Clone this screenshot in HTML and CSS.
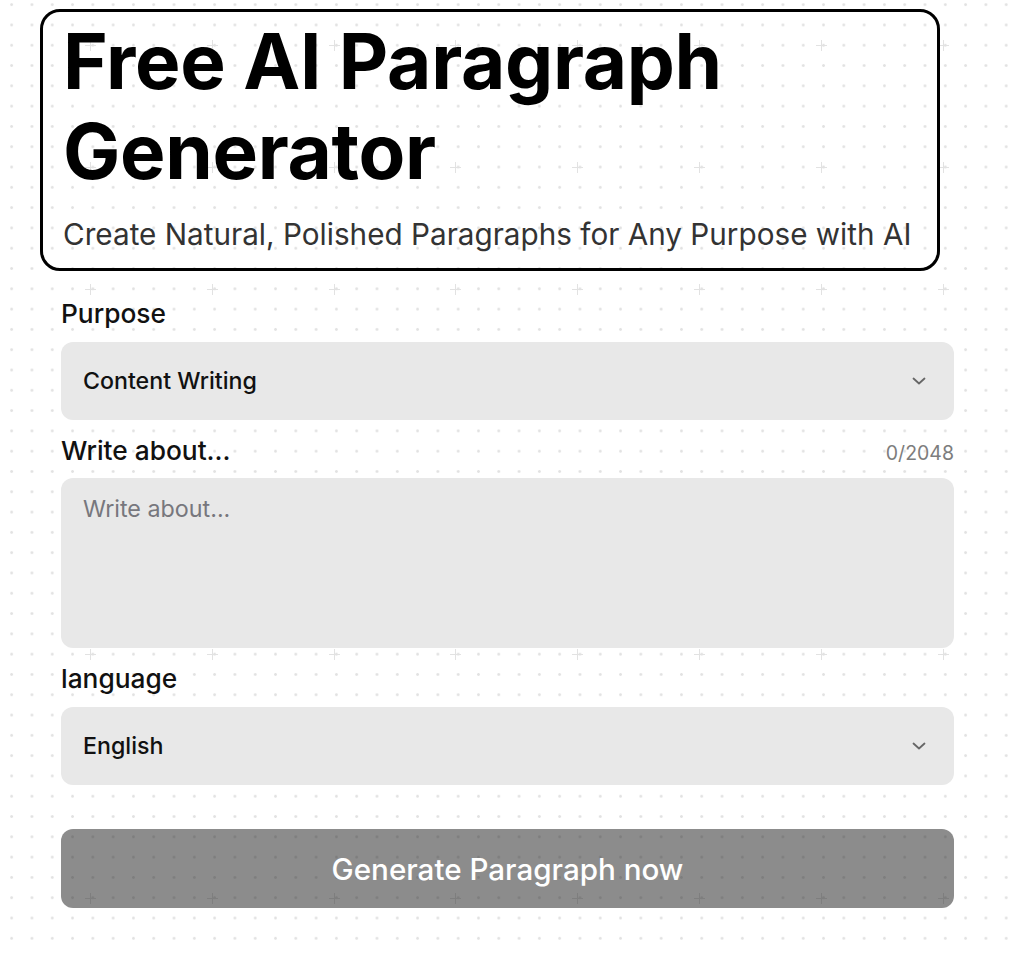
FILE: index.html
```html
<!DOCTYPE html>
<html lang="en">
<head>
    <meta charset="UTF-8">
    <meta name="viewport" content="width=device-width, initial-scale=1.0">
    <title>Free AI Paragraph Generator</title>
    <link rel="stylesheet" href="styles.css">
</head>
<body>
    <div class="page">
        <!-- Heading block -->
        <div class="hero">
            <h1>Free AI Paragraph Generator</h1>
            <p class="subtitle">Create Natural, Polished Paragraphs for Any Purpose with AI</p>
        </div>

        <!-- Generator form -->
        <form class="generator" onsubmit="return false;">
            <div class="field">
                <label for="purpose">Purpose</label>
                <div class="select-wrap">
                    <select id="purpose">
                        <option>Content Writing</option>
                        <option>Essay</option>
                        <option>Blog Post</option>
                        <option>Email</option>
                    </select>
                    <svg class="chevron" width="16" height="16" viewBox="0 0 16 16" fill="none">
                        <path d="M2.5 5.5 8 10.5l5.5-5" stroke="#666" stroke-width="1.8" stroke-linecap="round" stroke-linejoin="round"/>
                    </svg>
                </div>
            </div>

            <div class="field">
                <div class="label-row">
                    <label for="topic">Write about...</label>
                    <span class="counter">0/2048</span>
                </div>
                <textarea id="topic" maxlength="2048" placeholder="Write about..."></textarea>
            </div>

            <div class="field">
                <label for="language">language</label>
                <div class="select-wrap">
                    <select id="language">
                        <option>English</option>
                        <option>Spanish</option>
                        <option>French</option>
                        <option>German</option>
                    </select>
                    <svg class="chevron" width="16" height="16" viewBox="0 0 16 16" fill="none">
                        <path d="M2.5 5.5 8 10.5l5.5-5" stroke="#666" stroke-width="1.8" stroke-linecap="round" stroke-linejoin="round"/>
                    </svg>
                </div>
            </div>

            <button type="submit" class="generate-btn">Generate Paragraph now</button>
        </form>
    </div>
</body>
</html>
```

FILE: styles.css
```css
* {
    margin: 0;
    padding: 0;
    box-sizing: border-box;
}

body {
    font-family: Inter, "Liberation Sans", sans-serif;
    color: #111;
    background-color: #fff;
    /* dotted grid, with a small cross on every sixth dot */
    background-image:
        url("data:image/svg+xml,%3Csvg xmlns='http://www.w3.org/2000/svg' width='121.8' height='121.8'%3E%3Cpath d='M5 10.5h11M10.5 5v11' stroke='%23e2e2e2' stroke-width='1'/%3E%3C/svg%3E"),
        radial-gradient(circle, #e2e2e2 1.1px, transparent 1.6px);
    background-size: 121.8px 121.8px, 20.3px 20.3px;
    background-position: 80px 35px, 1.5px -5.5px;
    min-height: 100vh;
}

.page {
    padding-top: 9px;
}

.hero {
    margin-left: 40px;
    width: 900px;
    height: 262px;
    border: 3px solid #000;
    border-radius: 20px;
    padding: 4px 0 0 20px;
}

.hero h1 {
    font-size: 76.4px;
    font-weight: 700;
    line-height: 90px;
    letter-spacing: -0.3px;
    color: #000;
}

.subtitle {
    margin-top: 20px;
    font-size: 29.7px;
    line-height: 36px;
    color: #333;
}

.generator {
    margin-left: 61px;
    width: 893px;
    margin-top: 28px;
    display: flex;
    flex-direction: column;
    gap: 16px;
}

.field label {
    display: block;
    font-size: 26.3px;
    font-weight: 500;
    line-height: 30px;
    margin-bottom: 13px;
    color: #111;
}

.label-row {
    display: flex;
    justify-content: space-between;
    align-items: baseline;
    margin-bottom: 12px;
}

.label-row label {
    margin-bottom: 0;
}

.counter {
    font-size: 19.5px;
    color: #7d7d7d;
}

.select-wrap {
    position: relative;
}

select {
    appearance: none;
    -webkit-appearance: none;
    width: 100%;
    height: 78px;
    border: none;
    border-radius: 12px;
    background-color: #e8e8e8;
    padding: 0 22px;
    font-family: inherit;
    font-size: 23.2px;
    font-weight: 500;
    color: #111;
    outline: none;
}

.chevron {
    position: absolute;
    right: 27px;
    top: 31px;
    pointer-events: none;
}

textarea {
    display: block;
    width: 100%;
    height: 170px;
    border: none;
    border-radius: 12px;
    background-color: #e8e8e8;
    padding: 15px 22px;
    font-family: inherit;
    font-size: 23.3px;
    line-height: 32px;
    color: #111;
    resize: none;
    outline: none;
}

textarea::placeholder {
    color: #77777d;
}

.generate-btn {
    margin-top: 28px;
    height: 79px;
    border: none;
    border-radius: 12px;
    background-color: rgba(30, 30, 30, 0.51);
    color: #fff;
    font-family: inherit;
    font-size: 29.6px;
    font-weight: 500;
    cursor: pointer;
}
```
